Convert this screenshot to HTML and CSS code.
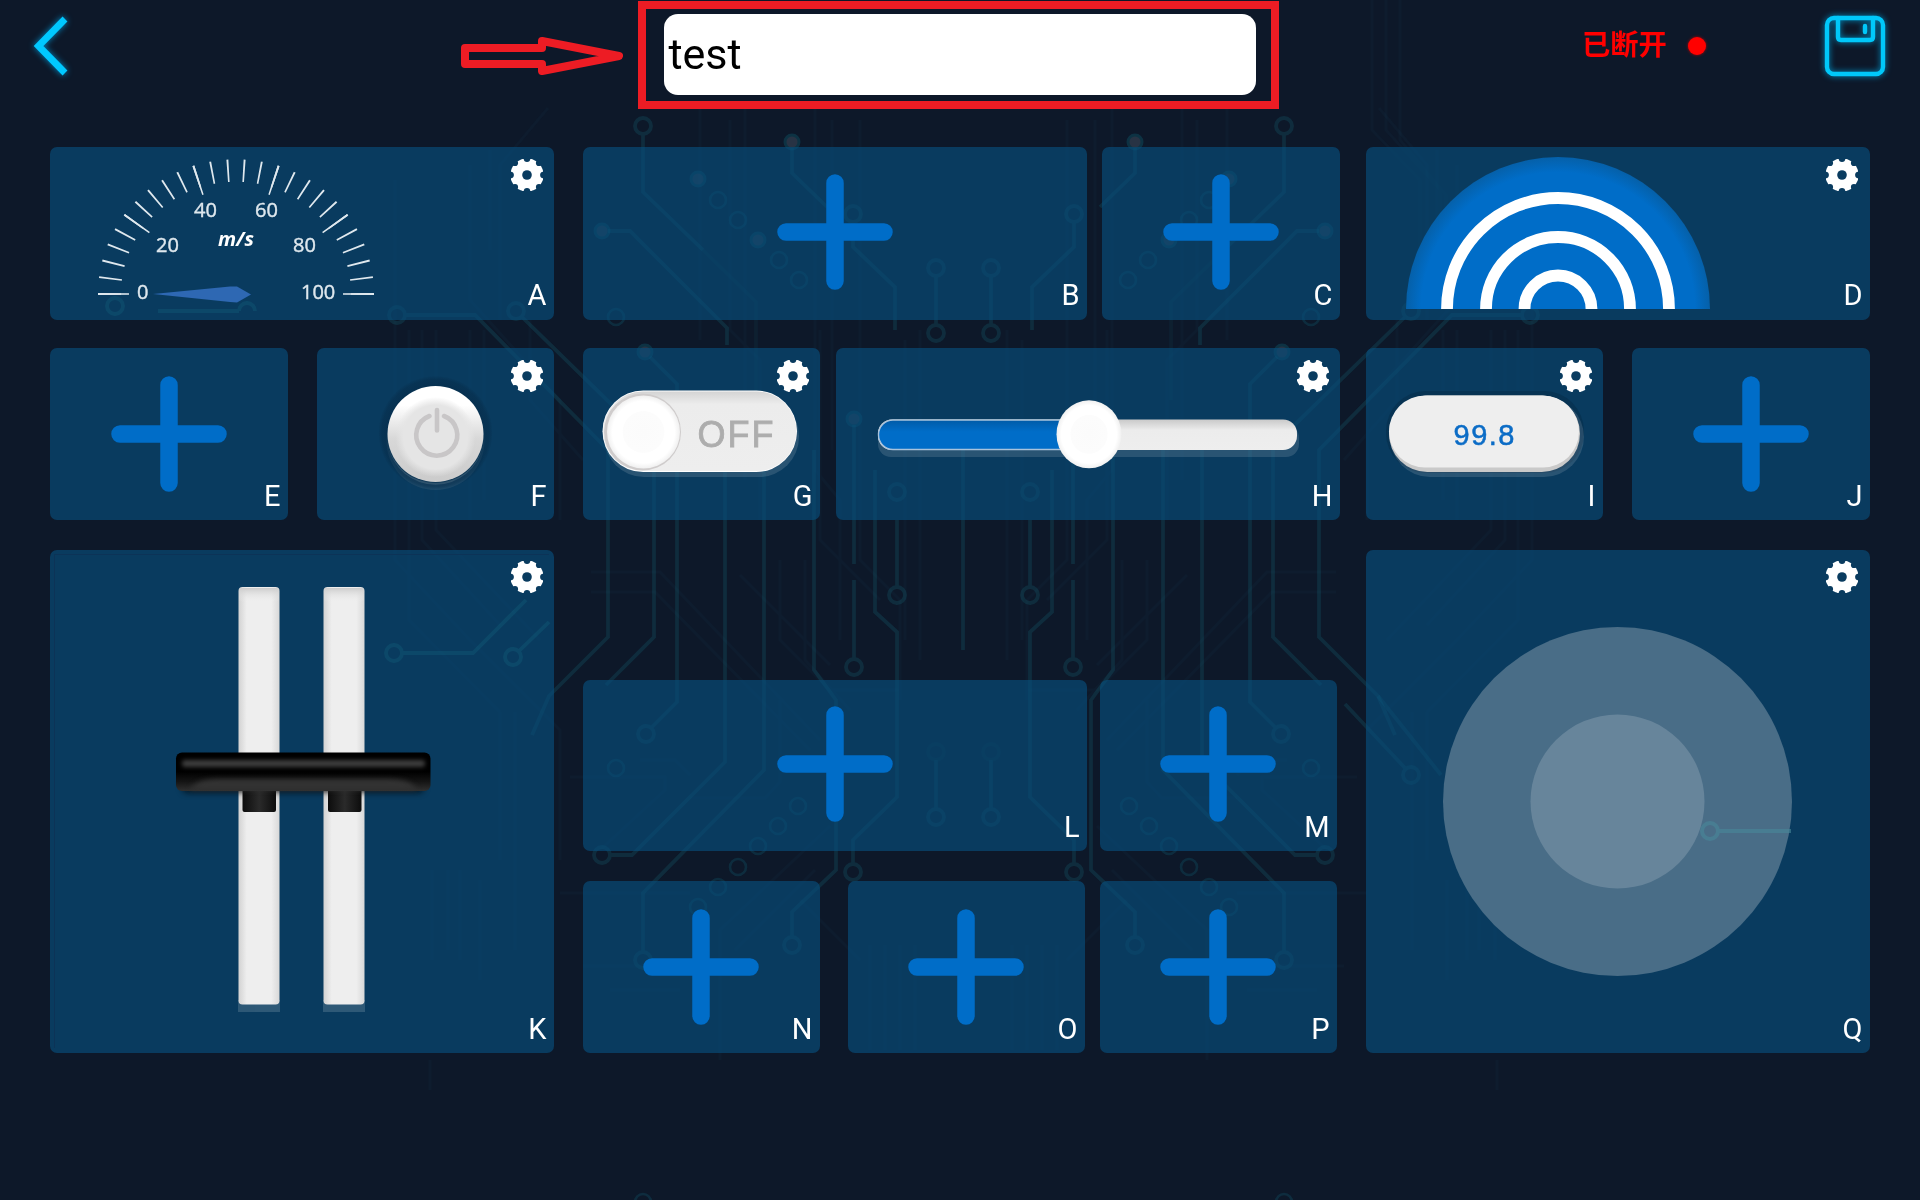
FILE: index.html
```html
<!DOCTYPE html>
<html lang="zh">
<head>
<meta charset="utf-8">
<title>test</title>
<link rel="stylesheet" href="styles.css">
</head>
<body>
<svg class="circuit" viewBox="0 0 1920 1200" aria-hidden="true">
  <defs>
    <g id="traces">
      <g class="faint">
        <path d="M548 108L500 165V320M490 150V250M470 165V300L560 400V520M395 180V560L470 640L560 730V860M409 330V620L500 712M422 330V540L500 625M436 330V530L540 640M470 330V520M484 330V500M530 320V400L583 460M700 108V340M730 120V330L760 360V520M745 108V480M815 108V470L840 500V640M832 120V450M860 120V560L900 600V700M905 340V640M920 330V660M780 560V640L830 690H900M591 572H660L820 740M591 592H655L810 750M740 575L830 665M640 760H675L690 775M690 798H765L780 782V700M570 777H665V790L600 850M560 893H690M583 966H655M500 712V860M515 712V950M460 870V960M432 870V960M448 870V950M480 880V980"/>
        <path d="M830 826L720 930V1060M815 870L735 950M870 945V1050M885 945V1050M900 945V1050M915 945V1050M800 900L860 960M430 1060V1090M610 990H680M820 330V540L880 600M805 560V660L850 710"/>
      </g>
      <g class="trace">
        <path d="M643 134V192L703 250"/><path class="dim" d="M703 250L756 302V400"/>
        <circle cx="643" cy="126" r="8"/>
        <path d="M792 148V173L827 207"/>
        <circle cx="853" cy="214" r="8"/><path d="M853 222V247L895 287V330"/>
        <circle cx="936" cy="268" r="8"/><path d="M936 276V324"/><circle cx="936" cy="333" r="8"/>
        <path d="M608 231H630L727 328V345"/>
        <path d="M405 315H475L608 450V637L549 696L532 735"/><circle cx="397" cy="315" r="8"/>
        <circle cx="516" cy="311" r="8"/><path d="M522 317L654 446V637L606 685"/>
        <path d="M650 357L677 384V702L652 727"/><circle cx="646" cy="734" r="8"/>
        <path d="M725 440V762L632 855H610"/><circle cx="602" cy="855" r="8"/>
        <path d="M764 440V770L643 893V952"/><circle cx="643" cy="960" r="8"/>
        <path d="M814 450V670L836 700V870L792 912V937"/><circle cx="792" cy="945" r="8"/>
        <path d="M854 425V564M854 580V659"/><circle cx="854" cy="667" r="8"/>
        <path d="M875 470V612L897 632V797L853 840V864"/><circle cx="853" cy="872" r="8"/>
        <circle cx="897" cy="492" r="8"/><path d="M897 520V564M897 564V586"/><circle cx="897" cy="595" r="8"/>
        <path d="M936 760V809"/><circle class="dim" cx="936" cy="752" r="8"/><circle cx="936" cy="817" r="8"/>
      </g>
      <g class="ring">
        <circle cx="718" cy="200" r="8"/><circle cx="738" cy="220" r="8"/><circle cx="779" cy="260" r="8"/><circle cx="799" cy="280" r="8"/>
        <circle cx="616" cy="317" r="8"/><circle cx="616" cy="768" r="8"/>
        <circle cx="798" cy="806" r="8"/><circle cx="778" cy="826" r="8"/><circle cx="758" cy="846" r="8"/><circle cx="738" cy="867" r="8"/><circle cx="718" cy="887" r="8"/><circle cx="698" cy="907" r="8"/>
        <circle cx="643" cy="1202" r="8"/>
      </g>
      <g class="dot">
        <circle cx="792" cy="142" r="7"/><circle cx="698" cy="179" r="7"/><circle cx="758" cy="240" r="7"/><circle cx="602" cy="231" r="7"/><circle cx="645" cy="352" r="7"/><circle cx="854" cy="419" r="7"/>
      </g>
    </g>
  </defs>
  <use href="#traces"/>
  <use href="#traces" transform="matrix(-1 0 0 1 1927 0)"/>
  <g class="trace"><path d="M963 440V650"/><circle cx="1411" cy="775" r="8"/><path d="M1378 696L1441 775M1345 704L1405 768"/></g>
  <path class="faint" d="M1372 0V130L1420 180V310M1386 0V130L1440 190V280M1400 0V140L1446 195V250"/>
</svg>

<svg class="defs" aria-hidden="true">
  <defs>
    <mask id="gear-cut">
      <rect width="32" height="32" fill="#fff"/>
      <circle cx="16" cy="16" r="4.8" fill="#000"/>
      <g fill="#000">
        <circle cx="16" cy="-.4" r="3.3"/><circle cx="16" cy="32.4" r="3.3"/><circle cx="-.4" cy="16" r="3.3"/><circle cx="32.4" cy="16" r="3.3"/>
        <circle cx="4" cy="4" r="3.1"/><circle cx="28" cy="4" r="3.1"/><circle cx="4" cy="28" r="3.1"/><circle cx="28" cy="28" r="3.1"/>
      </g>
    </mask>
    <symbol id="gear" viewBox="0 0 32 32"><circle cx="16" cy="16" r="16.6" fill="#fff" mask="url(#gear-cut)"/></symbol>
    <symbol id="plus" viewBox="0 0 116 116"><path d="M9 58H107M58 9V107" stroke="#006dc8" stroke-width="17.5" stroke-linecap="round"/></symbol>
    <linearGradient id="btn" x1="0" y1="0" x2="0" y2="1"><stop offset=".2" stop-color="#fff"/><stop offset=".55" stop-color="#d8d8d8"/><stop offset="1" stop-color="#cbcbcb"/></linearGradient>
    <radialGradient id="btn-face"><stop offset=".8" stop-color="#e5e5e5"/><stop offset="1" stop-color="#e5e5e5" stop-opacity="0"/></radialGradient>
    <radialGradient id="halo"><stop offset=".84" stop-color="#062b48"/><stop offset=".94" stop-color="#062b48" stop-opacity=".8"/><stop offset="1" stop-color="#062b48" stop-opacity=".1"/></radialGradient>
    <radialGradient id="knob"><stop offset="0" stop-color="#fbfbfb"/><stop offset=".56" stop-color="#fcfcfc"/><stop offset=".58" stop-color="#fff"/><stop offset=".85" stop-color="#fff"/><stop offset="1" stop-color="#f0f0f0"/></radialGradient>
    <linearGradient id="track" x1="0" y1="0" x2="0" y2="1"><stop offset="0" stop-color="#c9c9c9"/><stop offset=".35" stop-color="#ececec"/><stop offset="1" stop-color="#eee"/></linearGradient>
    <linearGradient id="toggle" x1="0" y1="0" x2="0" y2="1"><stop offset="0" stop-color="#d4d4d4"/><stop offset=".16" stop-color="#ececec"/><stop offset="1" stop-color="#eee"/></linearGradient>
    <linearGradient id="fill" x1="0" y1="0" x2="0" y2="1"><stop offset="0" stop-color="#005ba8"/><stop offset=".4" stop-color="#006dc8"/></linearGradient>
    <radialGradient id="dome"><stop offset=".9" stop-color="#006dc8"/><stop offset="1" stop-color="#0560a9"/></radialGradient>
    <linearGradient id="bar" x1="0" y1="0" x2="0" y2="1"><stop offset="0" stop-color="#000"/><stop offset=".5" stop-color="#000"/><stop offset=".75" stop-color="#141414"/><stop offset="1" stop-color="#303030"/></linearGradient>
    <linearGradient id="leg"><stop offset="0" stop-color="#0c0c0c"/><stop offset=".5" stop-color="#2a2a2a"/><stop offset="1" stop-color="#0c0c0c"/></linearGradient>
    <linearGradient id="rail"><stop offset="0" stop-color="#d2d2d2"/><stop offset=".2" stop-color="#eee"/><stop offset=".8" stop-color="#eee"/><stop offset="1" stop-color="#d8d8d8"/></linearGradient>
    <linearGradient id="rail-top" x1="0" y1="0" x2="0" y2="1"><stop offset="0" stop-color="#ccc"/><stop offset="1" stop-color="#eee" stop-opacity="0"/></linearGradient>
    <clipPath id="upper"><rect x="90" y="150" width="300" height="145.500"/></clipPath>
    <clipPath id="half"><rect x="1400" y="150" width="320" height="159"/></clipPath>
  </defs>
</svg>

<header class="topbar">
  <svg class="back" viewBox="28 10 45 72"><path d="M65 19L38.500 46L65 73"/></svg>
  <svg class="arrow" viewBox="457 33 172 46"><path d="M465 48H542V41L619 56L542 71V64H465Z"/></svg>
  <div class="name-frame"><div class="name-input">test</div></div>
  <div class="status"><span>已断开</span><i class="led"></i></div>
  <svg class="save" viewBox="1817 8 76 76">
    <rect x="1827" y="18" width="56" height="56" rx="7"/><path d="M1838 18V37Q1838 40 1841 40H1870Q1873 40 1873 37V18"/><path d="M1865 26V32"/>
  </svg>
</header>

<main class="board">
  <div class="row">
    <section class="card wide">
      <svg class="widget" viewBox="50 147 504 173">
        <g class="trace"><circle cx="115" cy="306" r="8"/><path d="M158 311H239M239 311A8 8 0 0 1 255 311"/></g>
        <g clip-path="url(#upper)"><g class="ticks" transform="translate(236 294) scale(1 .976)">
          <circle r="126.500" pathLength="3600" stroke-width="23" stroke-dasharray="8 64" stroke-dashoffset="4"/>
          <circle r="122.500" pathLength="3600" stroke-width="31" stroke-dasharray="8 352" stroke-dashoffset="4"/>
        </g></g>
        <g class="scale"><text x="137" y="299">0</text><text x="156" y="252">20</text><text x="194" y="217">40</text><text x="255" y="217">60</text><text x="293" y="252">80</text><text x="301" y="299">100</text><text class="unit" x="218" y="246">m/s</text></g>
        <path d="M153 294L230 286.500H237L251 294.500L237 302.500L230 302Z" fill="#2e68b3"/>
      </svg>
      <svg class="gear"><use href="#gear"/></svg><b class="slot">A</b>
    </section>
    <section class="card wide g29"><svg class="plus"><use href="#plus"/></svg><b class="slot">B</b></section>
    <section class="card g15"><svg class="plus"><use href="#plus"/></svg><b class="slot">C</b></section>
    <section class="card wide g26">
      <svg class="widget" viewBox="1366 147 504 173">
        <g clip-path="url(#half)"><circle cx="1558" cy="309" r="152" fill="url(#dome)"/>
        <g fill="none" stroke="#fff" stroke-width="11.8"><circle cx="1558" cy="309" r="111"/><circle cx="1558" cy="309" r="72"/><circle cx="1558" cy="309" r="33.500"/></g></g>
      </svg>
      <svg class="gear inset"><use href="#gear"/></svg><b class="slot">D</b>
    </section>
  </div>

  <div class="row second">
    <section class="card"><svg class="plus"><use href="#plus"/></svg><b class="slot">E</b></section>
    <section class="card g29 narrow">
      <svg class="widget" viewBox="317 348 237 172">
        <circle cx="435.500" cy="441" r="49" fill="#fff" opacity=".09"/>
        <circle cx="435.500" cy="433" r="57" fill="url(#halo)" opacity=".6"/>
        <path d="M388 446A49 49 0 0 0 483 446A48.500 48.500 0 0 1 388 446" fill="#fff" opacity=".12"/>
        <circle cx="435.500" cy="434" r="48" fill="url(#btn)"/>
        <circle cx="435.500" cy="437" r="40" fill="url(#btn-face)"/>
        <path d="M429.500 416A20.500 20.500 0 1 0 444 416M437 410V430.500" fill="none" stroke="#c8c6c7" stroke-width="4.600" stroke-linecap="round"/>
      </svg>
      <svg class="gear"><use href="#gear"/></svg><b class="slot">F</b>
    </section>
    <section class="card g29 narrow">
      <svg class="widget" viewBox="583 348 237 172">
        <rect x="604" y="396" width="195" height="81" rx="40" fill="#fff" opacity=".13"/>
        <rect x="602.500" y="390.500" width="194.500" height="81.500" rx="40.700" fill="#fff"/>
        <rect x="603" y="391.500" width="193.500" height="79.500" rx="39.700" fill="url(#toggle)"/>
        <circle cx="642.500" cy="432" r="38.500" fill="#cfcccc"/>
        <circle cx="643.500" cy="432" r="36.500" fill="url(#knob)"/>
        <text class="off" x="697.500" y="446.500" textLength="76">OFF</text>
      </svg>
      <svg class="gear"><use href="#gear"/></svg><b class="slot">G</b>
    </section>
    <section class="card wide g16">
      <svg class="widget" viewBox="836 348 504 172">
        <rect x="878" y="425" width="421" height="32" rx="13" fill="#fff" opacity=".13"/>
        <rect x="878" y="419.500" width="419" height="30.500" rx="14" fill="url(#track)"/>
        <path d="M1089 420H893A14.500 14.750 0 0 0 893 449.500H1089" fill="url(#fill)" stroke="#a9c3dc" stroke-width="1.400"/>
        <ellipse cx="1089" cy="434.300" rx="32.500" ry="34" fill="url(#knob)"/>
      </svg>
      <svg class="gear"><use href="#gear"/></svg><b class="slot">H</b>
    </section>
    <section class="card g26 narrow">
      <svg class="widget" viewBox="1366 348 237 172">
        <rect x="1386" y="391" width="198" height="82" rx="40" fill="#062b48" opacity=".5"/>
        <rect x="1390" y="397" width="194" height="80" rx="40" fill="#fff" opacity=".13"/>
        <rect x="1389" y="395.500" width="191" height="76.500" rx="38.200" fill="#c9c9c9"/>
        <rect x="1389" y="395.500" width="190" height="72" rx="36" fill="#eee"/>
        <text class="reading" x="1453.500" y="444.500" textLength="61">99.8</text>
      </svg>
      <svg class="gear"><use href="#gear"/></svg><b class="slot">I</b>
    </section>
    <section class="card g29"><svg class="plus"><use href="#plus"/></svg><b class="slot">J</b></section>
  </div>

  <div class="row third">
    <section class="card wide">
      <svg class="widget" viewBox="50 550 504 503">
        <path d="M549 554.500H54.500V1048" fill="none" stroke="#0c3357" stroke-width="1"/>
        <g class="trace"><circle cx="394" cy="653" r="8"/><path d="M402 653H473L526 600"/><circle cx="513" cy="657" r="8"/><path d="M519 651L549 622"/></g>
        <g fill="#fff" opacity=".15"><rect x="238" y="1000" width="42" height="12"/><rect x="323" y="1000" width="42" height="12"/></g>
        <rect x="238.500" y="587" width="41" height="417.500" rx="4" fill="url(#rail)"/><rect x="323.500" y="587" width="41" height="417.500" rx="4" fill="url(#rail)"/>
        <rect x="239" y="588" width="40" height="14" rx="3" fill="url(#rail-top)"/><rect x="324" y="588" width="40" height="14" rx="3" fill="url(#rail-top)"/>
        <rect class="shade" x="182" y="780" width="242" height="13" rx="5"/>
        <rect x="242.500" y="785" width="33.500" height="27" rx="2" fill="url(#leg)"/><rect x="328" y="785" width="33.500" height="27" rx="2" fill="url(#leg)"/>
        <rect x="176" y="752.500" width="254.500" height="38.500" rx="6" fill="url(#bar)"/>
        <rect class="sheen" x="182" y="760" width="243" height="7" rx="3"/>
        <path class="gloss" d="M190 790Q196 779 218 779H389Q411 779 417 790Z"/>
      </svg>
      <svg class="gear"><use href="#gear"/></svg><b class="slot">K</b>
    </section>
    <div class="center">
      <div class="row upper">
        <section class="card wide"><svg class="plus"><use href="#plus"/></svg><b class="slot">L</b></section>
        <section class="card g13 narrow"><svg class="plus"><use href="#plus"/></svg><b class="slot">M</b></section>
      </div>
      <div class="row lower">
        <section class="card narrow"><svg class="plus"><use href="#plus"/></svg><b class="slot">N</b></section>
        <section class="card g28 narrow"><svg class="plus"><use href="#plus"/></svg><b class="slot">O</b></section>
        <section class="card g15 narrow"><svg class="plus"><use href="#plus"/></svg><b class="slot">P</b></section>
      </div>
    </div>
    <section class="card wide">
      <svg class="widget" viewBox="1366 550 504 503">
        <circle cx="1617.500" cy="801.500" r="174.500" fill="#496d87"/>
        <circle cx="1617.500" cy="801.500" r="87" fill="#67859b"/>
        <g class="glow"><circle cx="1710" cy="831" r="8"/><path d="M1718 831H1791"/></g>
      </svg>
      <svg class="gear inset"><use href="#gear"/></svg><b class="slot">Q</b>
    </section>
  </div>
</main>
</body>
</html>
```
FILE: styles.css
```css
* { box-sizing: border-box; }
body {
  margin: 0;
  width: 1920px;
  height: 1200px;
  overflow: hidden;
  background: #0d1829;
  font-family: Roboto, "Noto Sans CJK SC", sans-serif;
  color: #fff;
}
svg { display: block; }
.defs { position: absolute; width: 0; height: 0; }

/* decorative circuit-board backdrop */
.circuit { position: absolute; inset: 0; width: 1920px; height: 1200px; z-index: -1; }
.trace { fill: none; stroke: #1b8596; stroke-width: 3.8; opacity: .19; }
.trace .dim { opacity: .4; }
.ring { fill: none; stroke: #127f95; stroke-width: 2.6; opacity: .2; }
.dot { fill: #7d8296; stroke: #127f95; stroke-width: 3; opacity: .25; }
.faint { fill: none; stroke: #1d6680; stroke-width: 3; opacity: .06; }
.glow { fill: none; stroke: #48889a; stroke-width: 4; opacity: .6; }

/* header */
.topbar { display: flex; align-items: flex-start; height: 147px; }
.back { width: 45px; height: 72px; margin: 10px 0 0 28px; fill: none; stroke: #00c8ff; stroke-width: 6.8; filter: drop-shadow(0 0 3px #0089c4); }
.arrow { width: 172px; height: 46px; margin: 33px 0 0 384px; fill: none; stroke: #ed1c24; stroke-width: 8; stroke-linejoin: round; }
.name-frame { width: 641px; height: 108px; margin: 1px 0 0 9px; padding: 5px 15px 6px 18px; border: 8px solid #ed1c24; }
.name-input { width: 592px; height: 81px; padding-left: 4.500px; border-radius: 14px; background: #fff; color: #000; font-size: 43px; line-height: 81px; }
.status { display: flex; align-items: center; height: 40px; margin: 24px 0 0 303px; color: #f00; font: 700 28.300px/40px "Noto Sans CJK SC", sans-serif; }
.status span { margin-top: -3px; }
.led { width: 18px; height: 18px; margin: 4px 0 0 21px; border-radius: 50%; background: #f00; box-shadow: 0 0 3px #b00; }
.save { width: 76px; height: 76px; margin: 8px 0 0 111px; fill: none; stroke: #00c8fa; stroke-width: 4.400; stroke-linecap: round; filter: drop-shadow(0 0 3px #008fc4); }

/* control board */
.board { width: 1820px; margin-left: 50px; }
.row { display: flex; height: 173px; }
.second { height: 172px; margin-top: 28px; }
.third { height: 503px; margin-top: 30px; }
.center { display: flex; flex-direction: column; justify-content: space-between; width: 757px; padding-top: 130px; margin: 0 26px 0 29px; }
.upper { height: 171px; }
.lower { height: 172px; }
.card { position: relative; display: flex; align-items: center; justify-content: center; flex: none; width: 238px; border-radius: 7px; background: rgba(8, 78, 124, .65); }
.wide { width: 504px; }
.narrow { width: 237px; }
.g13 { margin-left: 13px; }
.g15 { margin-left: 15px; }
.g16 { margin-left: 16px; }
.g26 { margin-left: 26px; }
.g28 { margin-left: 28px; }
.g29 { margin-left: 29px; }
.widget { width: 100%; height: 100%; }
.plus { width: 116px; height: 116px; margin: 0 1px 3px 0; }
.second .plus, .lower .plus { margin-bottom: 0; }
.gear { position: absolute; top: 12px; right: 11px; width: 32px; height: 32px; }
.third .gear { top: 11px; }
.inset { right: 12px; }
.slot { position: absolute; right: 7.500px; bottom: 10px; font-size: 29px; font-weight: 400; line-height: 29px; }
.second .slot, .third .slot { bottom: 9px; }

/* widgets */
.ticks { fill: none; stroke: #dfe8ee; }
.scale { fill: #dfe8ee; stroke: #dfe8ee; stroke-width: .4; font: 20px "Open Sans", sans-serif; }
.unit { font-weight: 700; font-style: italic; fill: #fff; stroke: none; }
.off { fill: #adadad; stroke: #adadad; stroke-width: .8; font: 36px "Liberation Sans", sans-serif; }
.reading { fill: #0b6cc6; stroke: #0b6cc6; stroke-width: .5; font: 29px "Liberation Sans", sans-serif; }
.shade { fill: #000; opacity: .6; filter: blur(3px); }
.sheen { fill: #3e3e3e; filter: blur(2px); }
.gloss { fill: #333; filter: blur(2.500px); }
```
